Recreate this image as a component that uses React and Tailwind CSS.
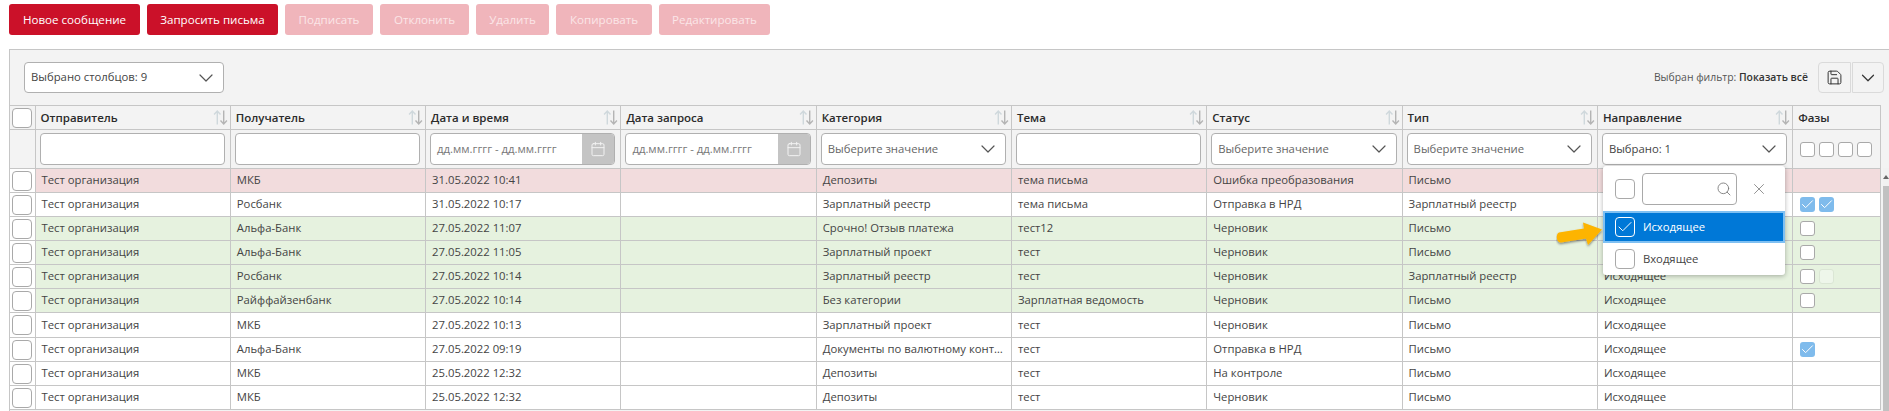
import React from 'react'
import { Calendar, Check, ChevronDown, Save, Search, X } from 'lucide-react'

const columns = ['Отправитель', 'Получатель', 'Дата и время', 'Дата запроса', 'Категория', 'Тема', 'Статус', 'Тип', 'Направление']

const rows = [
  { tone: 'pink', to: 'МКБ', date: '31.05.2022 10:41', cat: 'Депозиты', topic: 'тема письма', status: 'Ошибка преобразования', type: 'Письмо', phases: [] },
  { tone: 'white', to: 'Росбанк', date: '31.05.2022 10:17', cat: 'Зарплатный реестр', topic: 'тема письма', status: 'Отправка в НРД', type: 'Зарплатный реестр', phases: ['on', 'on'] },
  { tone: 'green', to: 'Альфа-Банк', date: '27.05.2022 11:07', cat: 'Срочно! Отзыв платежа', topic: 'тест12', status: 'Черновик', type: 'Письмо', phases: ['off'] },
  { tone: 'green', to: 'Альфа-Банк', date: '27.05.2022 11:05', cat: 'Зарплатный проект', topic: 'тест', status: 'Черновик', type: 'Письмо', phases: ['off'] },
  { tone: 'green', to: 'Росбанк', date: '27.05.2022 10:14', cat: 'Зарплатный реестр', topic: 'тест', status: 'Черновик', type: 'Зарплатный реестр', phases: ['off', 'dim'] },
  { tone: 'green', to: 'Райффайзенбанк', date: '27.05.2022 10:14', cat: 'Без категории', topic: 'Зарплатная ведомость', status: 'Черновик', type: 'Письмо', phases: ['off'] },
  { tone: 'white', to: 'МКБ', date: '27.05.2022 10:13', cat: 'Зарплатный проект', topic: 'тест', status: 'Черновик', type: 'Письмо', phases: [], tall: true },
  { tone: 'white', to: 'Альфа-Банк', date: '27.05.2022 09:19', cat: 'Документы по валютному контролю', topic: 'тест', status: 'Отправка в НРД', type: 'Письмо', phases: ['on'] },
  { tone: 'white', to: 'МКБ', date: '25.05.2022 12:32', cat: 'Депозиты', topic: 'тест', status: 'На контроле', type: 'Письмо', phases: [] },
  { tone: 'white', to: 'МКБ', date: '25.05.2022 12:32', cat: 'Депозиты', topic: 'тест', status: 'Черновик', type: 'Письмо', phases: [] },
]

const toneClass = { pink: 'bg-[#f2dcdd]', green: 'bg-[#e6f2df]', white: 'bg-white' }

function Button({ label, disabled, className }) {
  return (
    <button
      className={`h-[31px] rounded-[3px] text-[11.6px] ${disabled ? 'bg-[#f0b5bb] text-[#fbe6e8]' : 'bg-[#cb1129] text-white'} ${className}`}
    >
      {label}
    </button>
  )
}

function Box({ className = '' }) {
  return <span className={`block h-[20px] w-[20px] shrink-0 rounded-[4px] border border-[#a9a9a9] bg-white ${className}`} />
}

function SortIcon() {
  return (
    <svg width="15" height="15" viewBox="0 0 14 14" fill="none" strokeWidth="1.3">
      <path d="M4 13.5V1M1 4.2 4 1l3 3.2" stroke="#cfd8dc" />
      <path d="M10 .5V13M7 9.8l3 3.2 3-3.2" stroke="#b4b4b4" />
    </svg>
  )
}

function SelectBox({ label, dark }) {
  return (
    <div className="flex h-[32px] w-full items-center justify-between rounded-[4px] border border-[#b0b0b0] bg-white pl-[6px] pr-[5px]">
      <span className={`text-[11.3px] ${dark ? 'text-[#444444]' : 'text-[#666666]'}`}>{label}</span>
      <ChevronDown size={24} strokeWidth={1.2} className="text-[#555555]" />
    </div>
  )
}

function TextBox() {
  return <div className="h-[32px] w-full rounded-[4px] border border-[#b0b0b0] bg-white" />
}

function DateBox() {
  return (
    <div className="flex h-[32px] w-full overflow-hidden rounded-[4px] border border-[#b0b0b0] bg-white text-left">
      <span className="flex-1 pl-[6px] text-[11.3px] leading-[30px] text-[#777777]">дд.мм.гггг - дд.мм.гггг</span>
      <span className="flex w-[32px] items-center justify-center bg-[#c4c4c4]">
        <Calendar size={16} strokeWidth={1.5} className="text-[#f2f2f2]" />
      </span>
    </div>
  )
}

function Phase({ kind }) {
  if (kind === 'on') {
    return (
      <span className="flex h-[15px] w-[15px] items-center justify-center rounded-[3px] bg-[#7fbbec]">
        <Check size={15} strokeWidth={1.6} className="text-white" />
      </span>
    )
  }
  if (kind === 'dim') {
    return <span className="block h-[15px] w-[15px] rounded-[3px] border border-[#dbe6d5] bg-[#eef6ea]" />
  }
  return <span className="block h-[15px] w-[15px] rounded-[3px] border border-[#a9a9a9] bg-white" />
}

function Dropdown() {
  return (
    <div className="absolute left-[1px] top-[33px] z-10 w-[182px] rounded-[3px] bg-white shadow-[0_1px_5px_rgba(0,0,0,0.3)]">
      <div className="flex h-[45px] items-center pl-[12px]">
        <Box />
        <div className="ml-[7px] flex h-[32px] w-[95px] items-center justify-end rounded-[4px] border border-[#a9a9a9] pr-[4px]">
          <Search size={16} strokeWidth={1.3} className="text-[#777777]" />
        </div>
        <X size={18} strokeWidth={1.2} className="ml-[13px] text-[#888888]" />
      </div>
      <div className="flex h-[32px] items-center border-2 border-[#7fc0f2] bg-[#0078d7] pl-[10px] text-[11.3px] text-white">
        <span className="flex h-[20px] w-[20px] items-center justify-center rounded-[4px] border border-white">
          <Check size={18} strokeWidth={1.3} className="text-white" />
        </span>
        <span className="ml-[8px]">Исходящее</span>
      </div>
      <div className="flex h-[32px] items-center pl-[12px] text-[11.3px] text-[#444444]">
        <Box />
        <span className="ml-[8px]">Входящее</span>
      </div>
      {/* стрелка-указатель с аннотации на скриншоте */}
      <svg className="absolute left-[-47px] top-[56px]" width="50" height="28" viewBox="0 0 50 28">
        <defs>
          <filter id="arrowShadow" x="-20%" y="-30%" width="140%" height="170%">
            <feDropShadow dx="0" dy="1.5" stdDeviation="1.2" floodColor="#000000" floodOpacity="0.45" />
          </filter>
        </defs>
        <path
          d="M3 10.500 28 6.500 27 .5 46 7.500 32 23 30 16.500 5 20.500C0 20.500-.5 12 3 10.500Z"
          fill="#fdb400"
          filter="url(#arrowShadow)"
        />
      </svg>
    </div>
  )
}

export default function App() {
  return (
    <div className="relative h-[411px] w-full overflow-hidden bg-white font-['Open_Sans',sans-serif] text-[11.3px]">
      <div className="flex gap-[7px] pl-[9px] pt-[4px]">
        <Button label="Новое сообщение" className="w-[131px]" />
        <Button label="Запросить письма" className="w-[131px]" />
        <Button label="Подписать" disabled className="w-[88px]" />
        <Button label="Отклонить" disabled className="w-[89px]" />
        <Button label="Удалить" disabled className="w-[73px]" />
        <Button label="Копировать" disabled className="w-[96px]" />
        <Button label="Редактировать" disabled className="w-[111px]" />
      </div>

      <div className="ml-[9px] mt-[14px] border-l border-t border-[#c6c6c6] bg-[#f3f3f3]">
        <div className="flex h-[55px] items-center justify-between pl-[14px] pr-[5px]">
          <div className="flex h-[31px] w-[200px] items-center justify-between rounded-[4px] border border-[#b0b0b0] bg-white pl-[6px] pr-[5px]">
            <span className="text-[11.3px] text-[#444444]">Выбрано столбцов: 9</span>
            <ChevronDown size={24} strokeWidth={1.2} className="text-[#555555]" />
          </div>
          <div className="flex items-center">
            <span className="mr-[10px] text-[10.4px] text-[#555555]">
              Выбран фильтр: <span className="font-semibold text-[#333333]">Показать всё</span>
            </span>
            <span className="flex h-[31px] w-[33px] items-center justify-center rounded-l-[4px] border border-[#dadada]">
              <Save size={17} strokeWidth={1.4} className="text-[#333333]" />
            </span>
            <span className="ml-[1px] flex h-[31px] w-[32px] items-center justify-center rounded-r-[4px] border border-[#dadada]">
              <ChevronDown size={22} strokeWidth={1.3} className="text-[#333333]" />
            </span>
          </div>
        </div>

        <div className="flex items-start">
          <table className="w-[1871px] table-fixed border-collapse">
            <colgroup>
              <col className="w-[25px]" />
              {columns.map((name) => (
                <col key={name} className="w-[195.3px]" />
              ))}
              <col />
            </colgroup>
            <thead>
              <tr className="h-[24px]">
                <th className="border border-[#c6c6c6] border-l-0 px-[2px]">
                  <Box />
                </th>
                {columns.map((name) => (
                  <th key={name} className="border border-[#c6c6c6] pl-[5px] pr-[2px] text-left">
                    <div className="flex items-center justify-between text-[11.5px] font-semibold text-[#2b2b2b]">
                      {name}
                      <SortIcon />
                    </div>
                  </th>
                ))}
                <th className="border border-[#c6c6c6] pl-[5px] text-left text-[11.5px] font-semibold text-[#2b2b2b]">Фазы</th>
              </tr>
              <tr className="h-[39px]">
                <th className="border border-[#c6c6c6] border-l-0" />
                <th className="border border-[#c6c6c6] pl-[4px] pr-[5px] font-normal"><TextBox /></th>
                <th className="border border-[#c6c6c6] pl-[4px] pr-[5px] font-normal"><TextBox /></th>
                <th className="border border-[#c6c6c6] pl-[4px] pr-[5px] font-normal"><DateBox /></th>
                <th className="border border-[#c6c6c6] pl-[4px] pr-[5px] font-normal"><DateBox /></th>
                <th className="border border-[#c6c6c6] pl-[4px] pr-[5px] text-left font-normal"><SelectBox label="Выберите значение" /></th>
                <th className="border border-[#c6c6c6] pl-[4px] pr-[5px] font-normal"><TextBox /></th>
                <th className="border border-[#c6c6c6] pl-[4px] pr-[5px] text-left font-normal"><SelectBox label="Выберите значение" /></th>
                <th className="border border-[#c6c6c6] pl-[4px] pr-[5px] text-left font-normal"><SelectBox label="Выберите значение" /></th>
                <th className="border border-[#c6c6c6] pl-[4px] pr-[5px] text-left font-normal">
                  <div className="relative">
                    <SelectBox label="Выбрано: 1" dark />
                    <Dropdown />
                  </div>
                </th>
                <th className="border border-[#c6c6c6] pl-[7px]">
                  <div className="flex gap-[4px]">
                    <Phase kind="off" />
                    <Phase kind="off" />
                    <Phase kind="off" />
                    <Phase kind="off" />
                  </div>
                </th>
              </tr>
            </thead>
            <tbody className="text-[#444444]">
              {rows.map((row, i) => (
                <tr key={i} className={`${row.tall ? 'h-[25px]' : 'h-[24px]'} ${toneClass[row.tone]}`}>
                  <td className="border border-[#c6c6c6] border-l-0 bg-white px-[2px] py-0">
                    <Box />
                  </td>
                  <td className="border border-[#c6c6c6] px-[6px] py-0">Тест организация</td>
                  <td className="border border-[#c6c6c6] px-[6px] py-0">{row.to}</td>
                  <td className="border border-[#c6c6c6] px-[6px] py-0">{row.date}</td>
                  <td className="border border-[#c6c6c6] px-[6px] py-0" />
                  <td className="truncate border border-[#c6c6c6] px-[6px] py-0">{row.cat}</td>
                  <td className="truncate border border-[#c6c6c6] px-[6px] py-0">{row.topic}</td>
                  <td className="border border-[#c6c6c6] px-[6px] py-0">{row.status}</td>
                  <td className="border border-[#c6c6c6] px-[6px] py-0">{row.type}</td>
                  <td className="border border-[#c6c6c6] px-[6px] py-0">Исходящее</td>
                  <td className="border border-[#c6c6c6] pl-[7px] py-0">
                    <div className="flex gap-[4px]">
                      {row.phases.map((kind, j) => (
                        <Phase key={j} kind={kind} />
                      ))}
                    </div>
                  </td>
                </tr>
              ))}
            </tbody>
          </table>

          {/* полоса прокрутки таблицы */}
          <div className="ml-[2px] flex w-[6px] flex-col pt-[63px]">
            <div className="flex h-[18px] items-center justify-center bg-[#f1f1f1]">
              <span className="h-0 w-0 border-x-[3px] border-b-[4px] border-x-transparent border-b-[#666666]" />
            </div>
            <div className="h-[225px] bg-[#c1c1c1]" />
          </div>
        </div>
      </div>
    </div>
  )
}
